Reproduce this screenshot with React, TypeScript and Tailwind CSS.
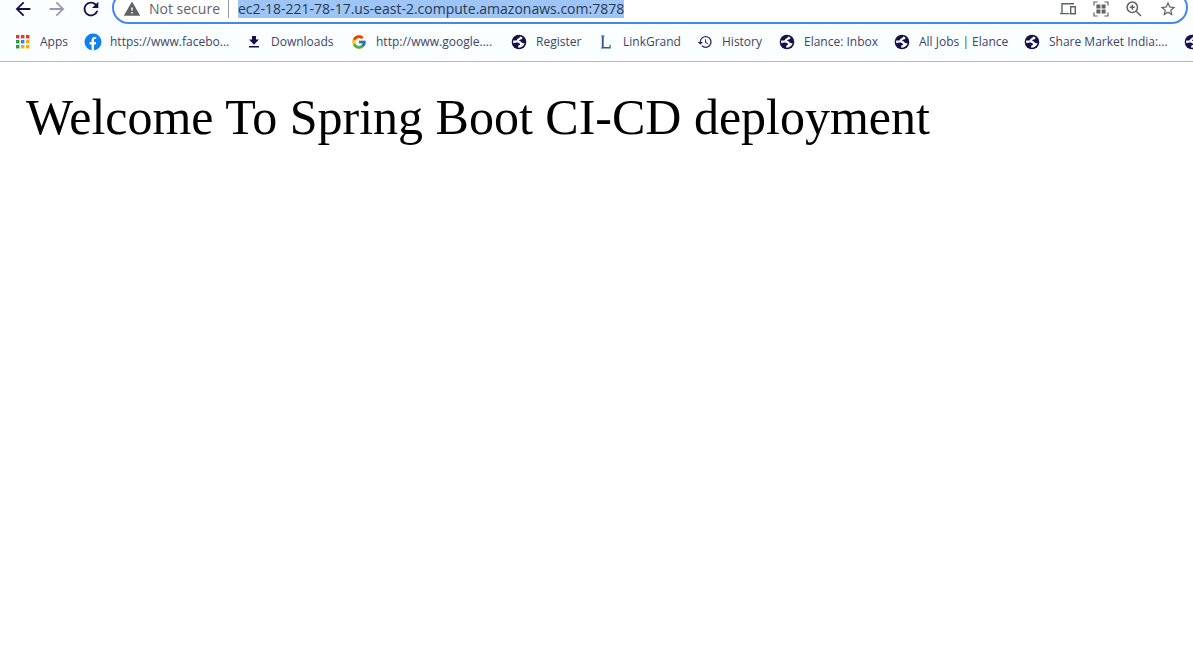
import type { ReactNode } from 'react';
import {
  MdArrowBack,
  MdArrowForward,
  MdHistory,
  MdRefresh,
  MdStarBorder,
  MdWarning,
} from 'react-icons/md';
import { FcGoogle } from 'react-icons/fc';

function GlobeIcon() {
  return (
    <svg viewBox="0 0 16 16" className="size-4">
      <circle cx="8" cy="8" r="7.3" fill="#16104a" />
      <path
        d="M9.4 2.4C8.6 2.4 8.8 3.8 8 4.2 6.6 4.4 6.2 4.6 6.2 5.8 5.8 6.6 4.6 6.4 2.2 6.6 2 7.6 2.1 8.3 2.4 9.2 4.4 8.4 6.4 8.2 7.4 8.8 8.2 9.4 9.4 9.6 9 10.8 8.6 11.4 7.4 11.2 7.2 12L7.2 13.8C10.2 13.8 12.8 12 13.6 9.2 12.4 9.2 11.2 9.4 10.6 8.6 10.2 7.6 9.6 6.8 8.2 6.9 8 6 9 5.4 9.8 5.4 10.8 5.4 11.6 4.6 11.4 3.4Z"
        fill="#fafdff"
      />
    </svg>
  );
}

function AppsIcon() {
  const colors = ['#ea3535', '#ea3535', '#ea3535', '#2b9a4b', '#2684fc', '#f9ab00', '#2b9a4b', '#f9ab00', '#f9ab00'];
  return (
    <svg viewBox="0 0 16 16" className="size-4">
      {colors.map((c, i) => (
        <rect key={i} x={1 + (i % 3) * 5} y={1 + Math.floor(i / 3) * 5} width="3.4" height="3.4" fill={c} />
      ))}
    </svg>
  );
}

function FacebookIcon() {
  return (
    <svg viewBox="0 0 18 18" className="size-[18px]">
      <circle cx="9" cy="9" r="8.5" fill="#0f80f2" />
      <path
        d="M7.6 17.4V11.4H5.6V8.9H7.6V7.2C7.6 5 8.8 3.9 10.7 3.9c.8 0 1.5.1 1.5.1v2h-1c-1 0-1.2.6-1.2 1.3v1.6h2.2l-.4 2.5H10v6Z"
        fill="#fff"
      />
    </svg>
  );
}

function DownloadIcon() {
  return (
    <svg viewBox="0 0 16 16" className="size-4" fill="#16104a">
      <path d="M6 2h4v3.6h3L8 10.8 3 5.6h3ZM3 12h10v1.6H3Z" />
    </svg>
  );
}

function LetterIcon() {
  return (
    <svg viewBox="0 0 16 16" className="size-4" fill="#345a8c">
      <path d="M3 1.5h3.6v.8l-.9.3v10.3h5.6l.5-2.2h1L12.6 14.5H3v-.8l.8-.3V2.6L3 2.3Z" />
    </svg>
  );
}

function DevicesIcon() {
  return (
    <svg viewBox="0 0 18 18" className="size-[18px]" fill="none" stroke="currentColor" strokeWidth="1.4">
      <path d="M15 3.7H3V13M1 13.6h9.5M11.7 6.7h4.6v7h-4.6Z" />
    </svg>
  );
}

function QrIcon() {
  return (
    <svg viewBox="0 0 16 16" className="size-4" fill="currentColor">
      <path d="M3.4 3.4h4v4h-4ZM8.6 3.4h4v4h-4ZM3.4 8.6h4v4h-4ZM8.6 8.6h4v4h-4Z" />
      <path d="M1 4.6V1h3.6M11.4 1H15v3.6M15 11.4V15h-3.6M4.6 15H1v-3.6" fill="none" stroke="currentColor" strokeWidth="1.2" />
    </svg>
  );
}

function ZoomIcon() {
  return (
    <svg viewBox="0 0 18 18" className="size-[18px]" fill="none" stroke="currentColor" strokeWidth="1.5">
      <circle cx="7.3" cy="7.3" r="5.2" />
      <path d="M11.2 11.2L16 16M7.3 4.8v5M4.8 7.3h5" />
    </svg>
  );
}

type BookmarkProps = { icon: ReactNode; label: string; width: string };

function Bookmark({ icon, label, width }: BookmarkProps) {
  return (
    <a href="#" className={`flex h-full shrink-0 items-center gap-2 whitespace-nowrap ${width}`}>
      <span className="flex w-[18px] shrink-0 justify-center">{icon}</span>
      <span>{label}</span>
    </a>
  );
}

const bookmarks: BookmarkProps[] = [
  { icon: <AppsIcon />, label: 'Apps', width: 'w-[70px]' },
  { icon: <FacebookIcon />, label: 'https://www.facebo...', width: 'w-[161px]' },
  { icon: <DownloadIcon />, label: 'Downloads', width: 'w-[105px]' },
  { icon: <FcGoogle className="size-4" />, label: 'http://www.google....', width: 'w-[160px]' },
  { icon: <GlobeIcon />, label: 'Register', width: 'w-[87px]' },
  { icon: <LetterIcon />, label: 'LinkGrand', width: 'w-[99px]' },
  { icon: <MdHistory className="size-4" color="#2b2560" />, label: 'History', width: 'w-[82px]' },
  { icon: <GlobeIcon />, label: 'Elance: Inbox', width: 'w-[115px]' },
  { icon: <GlobeIcon />, label: 'All Jobs | Elance', width: 'w-[130px]' },
  { icon: <GlobeIcon />, label: 'Share Market India:...', width: 'w-[160px]' },
  { icon: <GlobeIcon />, label: '', width: 'w-[30px]' },
];

export default function App() {
  return (
    <div className="min-h-screen overflow-hidden bg-white font-['Open_Sans','Noto_Sans',sans-serif]">
      <header className="border-b border-[#b5b7ba] bg-[#fafeff]">
        <div className="flex h-6 items-end overflow-hidden pr-[5px] pl-3">
          <div className="flex h-[33px] w-[100px] shrink-0 items-center gap-3 pt-[3px] text-[#16104a]">
            <button aria-label="Back"><MdArrowBack className="size-[22px]" /></button>
            <button aria-label="Forward" className="text-[#9b96b8]"><MdArrowForward className="size-[22px]" /></button>
            <button aria-label="Reload"><MdRefresh className="size-[22px]" /></button>
          </div>
          <div className="flex h-[33px] min-w-0 flex-1 items-center rounded-full border-2 border-[#4587ee] bg-white pt-[3px] pr-[9px] pl-[9px] text-sm leading-[18px] text-[#5f6368]">
            <MdWarning className="size-[18px] shrink-0" />
            <span className="ml-2 w-[79px] shrink-0 whitespace-nowrap">Not secure</span>
            <span className="mr-[9px] h-[18px] w-px shrink-0 bg-[#9a9c9f]" />
            <div className="flex min-w-0 flex-1">
              <span className="bg-[#9ec5f8] whitespace-nowrap text-[#2c3a4c]">
                ec2-18-221-78-17.us-east-2.compute.amazonaws.com:7878
              </span>
            </div>
            <div className="flex shrink-0 items-center gap-4">
              <button aria-label="Send to your devices"><DevicesIcon /></button>
              <button aria-label="Create QR code"><QrIcon /></button>
              <button aria-label="Zoom"><ZoomIcon /></button>
              <button aria-label="Bookmark this page"><MdStarBorder className="size-[18px]" /></button>
            </div>
          </div>
        </div>
        <nav aria-label="Bookmarks" className="flex h-[37px] items-center overflow-hidden pb-[2px] pl-[14px] text-xs text-[#3f4468]">
          {bookmarks.map((b, i) => (
            <Bookmark key={i} {...b} />
          ))}
        </nav>
      </header>
      <main className="px-[26px] pt-[26px] font-['Liberation_Serif',serif] text-[50px] leading-[58px] text-black">
        Welcome To Spring Boot CI-CD deployment
      </main>
    </div>
  );
}
